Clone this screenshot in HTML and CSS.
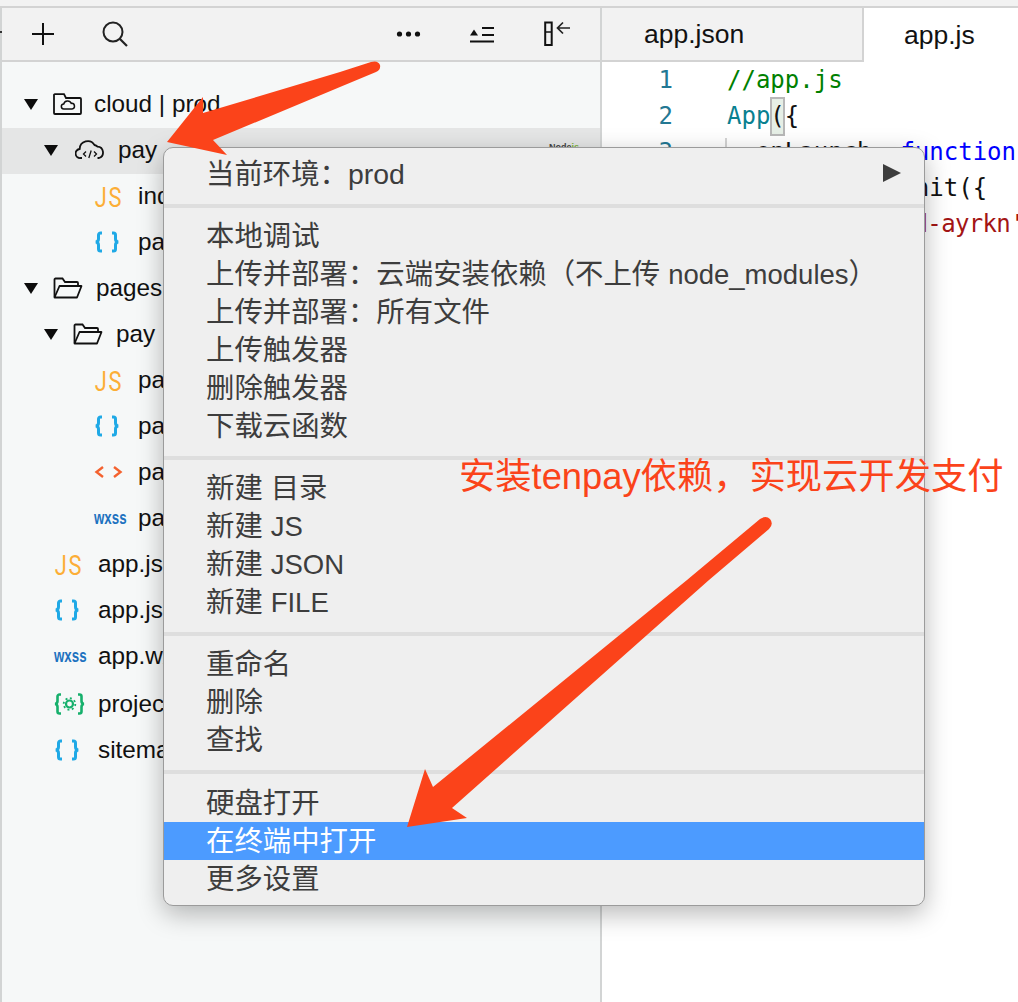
FILE: index.html
```html
<!DOCTYPE html>
<html lang="zh-CN">
<head>
<meta charset="utf-8">
<title>云开发</title>
<link rel="stylesheet" href="styles.css">
</head>
<body>
<div class="stage">
  <div class="topstrip"></div>
  <div class="workspace">
    <aside class="sidebar">
      <div class="toolbar">
        <div class="tool-left">
          <svg class="ic-plus" width="24" height="24" viewBox="0 0 24 24"><path d="M12 1v22M1 12h22" stroke="#111" stroke-width="2" fill="none"/></svg>
          <svg class="ic-search" width="28" height="28" viewBox="0 0 28 28"><circle cx="12" cy="11" r="9.500" stroke="#222" stroke-width="2" fill="none"/><path d="M19 18l7 7" stroke="#222" stroke-width="2.200" fill="none"/></svg>
        </div>
        <div class="tool-right">
          <svg class="ic-dots" width="26" height="8" viewBox="0 0 26 8"><circle cx="3.500" cy="4" r="2.600" fill="#111"/><circle cx="12.500" cy="4" r="2.600" fill="#111"/><circle cx="21.500" cy="4" r="2.600" fill="#111"/></svg>
          <svg class="ic-list" width="24" height="18" viewBox="0 0 24 18"><path d="M0 9.500L4 3.500L8 9.500z" fill="#111"/><path d="M12 2h12M12 9h12" stroke="#111" stroke-width="1.800" fill="none"/><path d="M0 15.500h24" stroke="#111" stroke-width="2"/></svg>
          <svg class="ic-split" width="26" height="26" viewBox="0 0 26 26"><rect x="1.200" y="1.500" width="6.500" height="22.500" fill="none" stroke="#111" stroke-width="2"/><path d="M1 11h7" stroke="#111" stroke-width="1.500"/><path d="M26 7H14M19 1.500L13.500 7l5.500 5.500" fill="none" stroke="#222" stroke-width="1.700"/></svg>
        </div>
      </div>
      <div class="tree">
        <div class="row lv0">
          <span class="caret"></span>
          <svg class="ficon" width="29" height="22" viewBox="0 0 29 22"><path d="M1 2.500V20a1 1 0 0 0 1 1h25a1 1 0 0 0 1-1V6a1 1 0 0 0-1-1H13L11 1.200H2A1 1 0 0 0 1 2.500z" fill="none" stroke="#111" stroke-width="1.800"/><path d="M11 16a2.500 2.500 0 0 1-.3-5 4 4 0 0 1 7.600-.6A2.800 2.800 0 0 1 19 16z" fill="none" stroke="#111" stroke-width="1.500"/></svg>
          <span class="label">cloud | prod</span>
        </div>
        <div class="row lv1 active">
          <span class="caret"></span>
          <svg class="ficon cloud" width="30" height="20" viewBox="0 0 30 20"><path d="M7 18H5.500a4.500 4.500 0 0 1-.8-9A8 8 0 0 1 19.500 5a5.500 5.500 0 0 1 3 1.700A5.800 5.800 0 0 1 24 18h-1.500" fill="none" stroke="#111" stroke-width="1.800"/><path d="M11 11.500L8.500 14l2.500 2.500M19 11.500l2.500 2.500-2.500 2.500M16.200 10.500l-2.400 7.500" fill="none" stroke="#111" stroke-width="1.300"/></svg>
          <span class="label">pay</span>
          <span class="nodejs">Node<i>js</i></span>
        </div>
        <div class="row file lv2"><span class="ic js">JS</span><span class="label">index.js</span></div>
        <div class="row file lv2"><span class="ic"><svg width="26" height="22" viewBox="0 0 26 22"><use href="#braces"/></svg></span><span class="label">package.json</span></div>
        <div class="row lv0">
          <span class="caret"></span>
          <svg class="ficon folder" width="30" height="22" viewBox="0 0 30 22"><use href="#folder"/></svg>
          <span class="label">pages</span>
        </div>
        <div class="row lv1">
          <span class="caret"></span>
          <svg class="ficon folder" width="30" height="22" viewBox="0 0 30 22"><use href="#folder"/></svg>
          <span class="label">pay</span>
        </div>
        <div class="row file lv2"><span class="ic js">JS</span><span class="label">pay.js</span></div>
        <div class="row file lv2"><span class="ic"><svg width="26" height="22" viewBox="0 0 26 22"><use href="#braces"/></svg></span><span class="label">pay.json</span></div>
        <div class="row file lv2"><span class="ic"><svg width="29" height="14" viewBox="0 0 29 14"><path d="M9 2L2.500 7 9 12M20 2l6.500 5L20 12" fill="none" stroke="#f4622f" stroke-width="2.400"/></svg></span><span class="label">pay.wxml</span></div>
        <div class="row file lv2"><span class="ic wxss">wxss</span><span class="label">pay.wxss</span></div>
        <div class="row file lv0f"><span class="ic js">JS</span><span class="label">app.js</span></div>
        <div class="row file lv0f"><span class="ic"><svg width="26" height="22" viewBox="0 0 26 22"><use href="#braces"/></svg></span><span class="label">app.json</span></div>
        <div class="row file lv0f"><span class="ic wxss">wxss</span><span class="label">app.wxss</span></div>
        <div class="row file lv0f project"><span class="ic"><svg width="31" height="22" viewBox="0 0 31 22"><path d="M7 1.500H5.500a2 2 0 0 0-2 2V8a3 3 0 0 1-2.300 3 3 3 0 0 1 2.300 3v4.500a2 2 0 0 0 2 2H7M24 1.500h1.500a2 2 0 0 1 2 2V8a3 3 0 0 0 2.300 3 3 3 0 0 0-2.300 3v4.500a2 2 0 0 1-2 2H24" fill="none" stroke="#16b06c" stroke-width="2.600"/><circle cx="15.500" cy="11" r="3.500" fill="none" stroke="#16b06c" stroke-width="2.200"/><circle cx="15.500" cy="11" r="5.800" fill="none" stroke="#16b06c" stroke-width="1.800" stroke-dasharray="2 2.500"/></svg></span><span class="label">project.config.json</span></div>
        <div class="row file lv0f"><span class="ic"><svg width="26" height="22" viewBox="0 0 26 22"><use href="#braces"/></svg></span><span class="label">sitemap.json</span></div>
      </div>
    </aside>
    <main class="editor">
      <div class="tabs">
        <div class="tab">app.json</div>
        <div class="tab current">app.js</div>
      </div>
      <div class="code">
        <div class="line"><span class="num">1</span><span class="src cm">//app.js</span></div>
        <div class="line"><span class="num">2</span><span class="src"><span class="ty">App</span><span class="match">(</span>{</span></div>
        <div class="line guide"><span class="num">3</span><span class="src">  onLaunch: <span class="kw">function</span></span></div>
        <div class="line"><span class="num">4</span><span class="src">   wx.cloud.init({</span></div>
        <div class="line"><span class="num">5</span><span class="src">      env: <span class="str">'xd-ayrkn'</span></span></div>
      </div>
    </main>
  </div>

  <div class="menu">
    <div class="group">
      <div class="item has-sub">当前环境&#xFF1A;prod<span class="sub-arrow"></span></div>
    </div>
    <div class="group">
      <div class="item">本地调试</div>
      <div class="item">上传并部署&#xFF1A;云端安装依赖&#xFF08;不上传 <span class="lat">node_modules</span>&#xFF09;</div>
      <div class="item">上传并部署&#xFF1A;所有文件</div>
      <div class="item">上传触发器</div>
      <div class="item">删除触发器</div>
      <div class="item">下载云函数</div>
    </div>
    <div class="group">
      <div class="item">新建 目录</div>
      <div class="item">新建 <span class="lat">JS</span></div>
      <div class="item">新建 <span class="lat">JSON</span></div>
      <div class="item">新建 <span class="lat">FILE</span></div>
    </div>
    <div class="group">
      <div class="item">重命名</div>
      <div class="item">删除</div>
      <div class="item">查找</div>
    </div>
    <div class="group last">
      <div class="item">硬盘打开</div>
      <div class="item selected">在终端中打开</div>
      <div class="item">更多设置</div>
    </div>
  </div>

  <div class="note">安装tenpay依赖&#xFF0C;实现云开发支付</div>

  <svg class="arrows" width="1018" height="1002" viewBox="0 0 1018 1002">
    <path d="M167 142L203 97L203 113L340 72L371 62Q378 60 380 65Q381 70 376 72L340 87L213 140L227 155Z" fill="#fb431a"/>
    <path d="M407 827L425 769L433 787L687 580L760 519Q766 515 770 519Q774 524 769 529L709 580L452 808L467 818Z" fill="#fb431a"/>
  </svg>

  <svg class="defs" width="0" height="0">
    <defs>
      <g id="braces"><path d="M8 2H6.500a2 2 0 0 0-2 2V8a3 3 0 0 1-2.800 3 3 3 0 0 1 2.800 3v4a2 2 0 0 0 2 2H8M18 2h1.500a2 2 0 0 1 2 2V8a3 3 0 0 0 2.800 3 3 3 0 0 0-2.800 3v4a2 2 0 0 1-2 2H18" fill="none" stroke="#1fa9e6" stroke-width="3"/></g>
      <g id="folder"><path d="M1.500 20V2.500a1 1 0 0 1 1-1h7L12 5h12a1 1 0 0 1 1 1v3" fill="none" stroke="#111" stroke-width="1.800"/><path d="M1.500 20.500h22.500l4.500-11.500H6.500z" fill="none" stroke="#111" stroke-width="1.800" stroke-linejoin="round"/></g>
    </defs>
  </svg>
</div>
</body>
</html>
```
FILE: styles.css
```css
* { box-sizing: border-box; }
html, body { margin: 0; padding: 0; }
body { background: #f6f8f8; font-family: "Liberation Sans", "Noto Sans CJK SC", sans-serif; }
.stage { position: relative; width: 1018px; height: 1002px; overflow: hidden; display: flex; flex-direction: column; }
.topstrip { height: 8px; background: #f2f2f2; border-bottom: 2px solid #d3d3d3; flex: none; }
.workspace { flex: 1; display: flex; min-height: 0; }

.sidebar { width: 602px; flex: none; border-left: 2px solid #d2d4d4; border-right: 2px solid #d2d4d4; background: #f6f8f8; }
.toolbar { position: relative; height: 54px; background: #f2f2f2; border-bottom: 2px solid #d3d3d3; display: flex; justify-content: space-between; align-items: center; padding: 0 30px 0 29px; }
.toolbar::before { content: ""; position: absolute; left: -2px; top: 23px; width: 2px; height: 2px; background: #333; }
.tool-left { display: flex; align-items: center; gap: 46px; }
.tool-right { display: flex; align-items: center; gap: 0; }
.ic-search { margin-top: 1px; }
.ic-dots { margin-right: 48px; }
.ic-list { margin-right: 50px; margin-top: 2px; }

.tree { padding-top: 20px; }
.row { height: 46px; padding-bottom: 2px; display: flex; align-items: center; font-size: 24.300px; color: #111; white-space: nowrap; }
.row.active { background: #e5e6e6; }
.row.project { margin-top: 2px; }
.lv0 { padding-left: 22px; }
.lv1 { padding-left: 42px; }
.row.file.lv2 { padding-left: 92px; }
.row.file.lv0f { padding-left: 52px; }
.caret { width: 0; height: 0; border-left: 7.500px solid transparent; border-right: 7.500px solid transparent; border-top: 11px solid #0c0c0c; margin-right: 15px; flex: none; }
.ficon { margin-right: 12px; flex: none; }
.ficon.cloud { margin-left: 2px; margin-right: 13px; }
.ficon.folder { margin-right: 13px; }
.ic { width: 44px; flex: none; display: flex; align-items: center; }
.js { font-family: "Roboto", sans-serif; font-size: 28px; font-weight: 400; color: #fcae36; letter-spacing: 2px; padding-left: 1px; margin-top: 2px; transform: scaleX(.78); transform-origin: left center; }
.wxss { font-size: 19px; font-weight: 700; color: #1d72c0; transform: scaleX(.7); transform-origin: left center; width: 44px; margin-top: -1px; }
.nodejs { margin-left: auto; margin-right: 21px; margin-bottom: 6px; font-size: 9px; font-weight: 700; color: #444; }
.nodejs i { font-style: normal; color: #7bb13c; }

.editor { flex: 1; min-width: 0; background: #fff; display: flex; flex-direction: column; }
.tabs { height: 54px; flex: none; display: flex; }
.tab { width: 262px; background: #f2f2f2; border-right: 2px solid #d3d3d3; border-bottom: 2px solid #d3d3d3; display: flex; align-items: center; padding-left: 42px; font-size: 26.500px; color: #111; }
.tab.current { flex: 1; width: auto; background: #fff; border: 0; padding-left: 40px; }
.code { font-family: "DejaVu Sans Mono", monospace; font-size: 24px; color: #111; }
.line { height: 36px; display: flex; align-items: center; white-space: pre; }
.num { width: 71px; text-align: right; color: #237893; margin-right: 54px; flex: none; }
.cm { color: #008000; }
.ty { color: #098090; }
.kw { color: #0000ff; }
.str { color: #a31515; letter-spacing: -.65px; }
.match { background: #e6efe6; box-shadow: 0 0 0 2px #b8b8b8 inset; padding: 5px 0 6px; }
.guide .src { border-left: 2px solid #d3d3d3; margin-left: -2px; }

.menu { position: absolute; left: 163px; top: 147px; width: 762px; height: 759px; background: #efefef; border: 1px solid #9b9b9b; border-radius: 10px; box-shadow: 0 8px 26px rgba(0,0,0,.28); font-family: "Liberation Sans", "Noto Sans CJK SC", sans-serif; font-size: 28.400px; color: #3d3d3d; overflow: hidden; padding-top: 7px; }
.group { border-bottom: 4px solid #dedede; padding: 0 0 11px; margin-bottom: 9px; }
.group.last { border-bottom: 0; padding-top: 1px; }
.item { height: 38px; line-height: 38px; padding-left: 42px; position: relative; white-space: nowrap; }
.item .lat { font-size: 27.500px; }
.item.selected { background: #4c9bff; color: #fff; }
.sub-arrow { position: absolute; right: 23px; top: 9px; width: 0; height: 0; border-top: 9.500px solid transparent; border-bottom: 9.500px solid transparent; border-left: 18px solid #3d3d3d; }

.note { position: absolute; left: 459px; top: 455px; font-size: 36.300px; line-height: 44px; color: #fb431a; white-space: nowrap; font-family: "Liberation Sans", "Noto Sans CJK SC", sans-serif; font-weight: 400; }
.arrows { position: absolute; left: 0; top: 0; pointer-events: none; }
.defs { position: absolute; }
```
